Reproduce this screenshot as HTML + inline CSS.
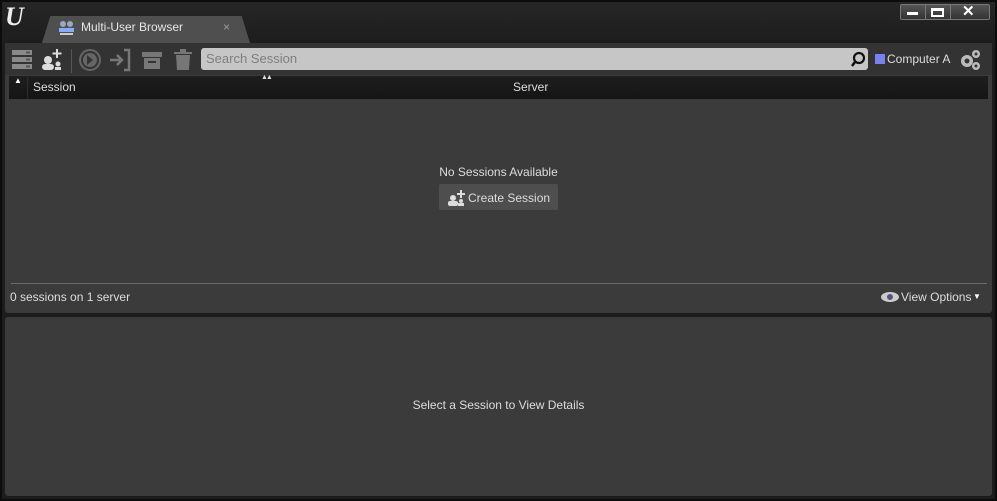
<!DOCTYPE html>
<html><head><style>
*{margin:0;padding:0;box-sizing:border-box}
body{width:997px;height:501px;background:#161616;font-family:"Liberation Sans",sans-serif;font-size:12px;color:#d8d8d8;position:relative;overflow:hidden}
.a{position:absolute}
</style></head><body>
<div class="a" style="left:0;top:0;width:997px;height:501px;border:2px solid #0c0c0c;background:linear-gradient(#262626,#1c1c1c 45px,#1c1c1c)"></div>
<div class="a" style="left:5px;top:2px;font:bold italic 26px 'Liberation Serif',serif;color:#eee;letter-spacing:-3px">U</div>
<div class="a" style="left:42px;top:16px;width:208px;height:27px;background:#4f4f4f;clip-path:polygon(4% 0,96% 0,100% 100%,0 100%);border-radius:6px 6px 0 0"></div>
<svg class="a" style="left:58px;top:20px" width="18" height="16"><circle cx="5" cy="4" r="3" fill="#9ab"/><circle cx="12" cy="4" r="3" fill="#9ab"/><rect x="1" y="8" width="15" height="4" fill="#8af"/><rect x="2" y="13" width="13" height="2" fill="#ccc"/></svg>
<div class="a" style="left:81px;top:20px;font-size:12px;color:#e6e6e6">Multi-User Browser</div>
<div class="a" style="left:223px;top:20px;color:#999;font-size:12px">×</div>
<div class="a" style="left:900px;top:4px;width:90px;height:16px;background:linear-gradient(#555,#333);border:1px solid #777;border-radius:2px"></div>
<div class="a" style="left:925px;top:4px;width:1px;height:16px;background:#777"></div>
<div class="a" style="left:950px;top:4px;width:1px;height:16px;background:#777"></div>
<div class="a" style="left:907px;top:12px;width:11px;height:3px;background:#fff"></div>
<div class="a" style="left:931px;top:8px;width:13px;height:9px;border:2px solid #fff;border-top-width:3px"></div>
<div class="a" style="left:962px;top:2px;color:#fff;font-weight:bold;font-size:15px">✕</div>
<div class="a" style="left:5px;top:43px;width:987px;height:270px;background:#3b3b3b;border-radius:3px"></div>
<div class="a" style="left:5px;top:43px;width:987px;height:32px;background:#333"></div>
<svg class="a" style="left:10px;top:47px" width="185" height="26">
<g fill="#8a8a8a"><rect x="2" y="3" width="20" height="5"/><rect x="2" y="10" width="20" height="5"/><rect x="2" y="17" width="20" height="5"/></g>
<g fill="#555"><rect x="16" y="4.5" width="4" height="2"/><rect x="16" y="11.5" width="4" height="2"/><rect x="16" y="18.5" width="4" height="2"/></g>
<g fill="#ddd"><circle cx="38" cy="13" r="4"/><rect x="32" y="17" width="12" height="6" rx="3"/><circle cx="48" cy="17" r="2.5"/><rect x="45" y="20" width="6" height="3"/><rect x="46" y="2" width="2" height="9"/><rect x="42.5" y="5.5" width="9" height="2"/></g>
<rect x="61" y="2" width="1" height="24" fill="#555"/>
<circle cx="80" cy="13" r="10" fill="none" stroke="#666" stroke-width="2"/><circle cx="80" cy="13" r="7" fill="#666"/><path d="M77 8l6 5-6 5z" fill="#333"/>
<path d="M100 13h11M107 8l5 5-5 5M114 3h5v20h-5" stroke="#777" stroke-width="2.5" fill="none"/>
<rect x="132" y="5" width="20" height="5" fill="#777"/><rect x="134" y="11" width="16" height="11" fill="#777"/><rect x="138" y="14" width="8" height="2" fill="#333"/>
<g fill="#777"><rect x="164" y="5" width="18" height="2"/><rect x="170" y="2" width="6" height="3"/><path d="M166 8h14l-1 15h-12z"/></g>
</svg>
<div class="a" style="left:201px;top:48px;width:667px;height:22px;background:#c6c6c6;border-radius:3px"></div>
<div class="a" style="left:206px;top:51px;color:#7e7e7e;font-size:13px">Search Session</div>
<svg class="a" style="left:850px;top:51px" width="16" height="16"><circle cx="9" cy="7" r="5" stroke="#111" stroke-width="2.2" fill="none"/><path d="M5 11l-3 4" stroke="#111" stroke-width="2.5"/></svg>
<div class="a" style="left:875px;top:54px;width:10px;height:10px;background:#7a80f0"></div>
<div class="a" style="left:887px;top:52px;color:#ddd;font-size:12px">Computer A</div>
<svg class="a" style="left:958px;top:48px" width="24" height="24" fill="#bbb"><circle cx="9" cy="13" r="6"/><circle cx="9" cy="13" r="2.5" fill="#333"/><circle cx="18" cy="6" r="4"/><circle cx="18" cy="18" r="4"/><circle cx="18" cy="6" r="1.5" fill="#333"/><circle cx="18" cy="18" r="1.5" fill="#333"/></svg>
<div class="a" style="left:9px;top:76px;width:979px;height:23px;background:linear-gradient(#1e1e1e,#151515)"></div>
<div class="a" style="left:27px;top:77px;width:1px;height:21px;background:#2c2c2c"></div>
<div class="a" style="left:14px;top:76px;color:#fff;font-size:8px">▲</div>
<div class="a" style="left:261px;top:74px;color:#ddd;font-size:7px;letter-spacing:-2px">▲▲</div>
<div class="a" style="left:33px;top:80px;color:#ddd;font-size:12px">Session</div>
<div class="a" style="left:513px;top:80px;color:#ddd;font-size:12px">Server</div>
<div class="a" style="left:0;top:165px;width:997px;text-align:center;font-size:12px;color:#ddd">No Sessions Available</div>
<div class="a" style="left:439px;top:184px;width:119px;height:26px;background:#4e4e4e;border-radius:2px"></div>
<svg class="a" style="left:447px;top:189px" width="20" height="18" fill="#ddd"><circle cx="6" cy="9" r="3"/><rect x="1" y="12" width="10" height="5" rx="2"/><circle cx="14" cy="12" r="2"/><rect x="11" y="14" width="6" height="3"/><rect x="13" y="1" width="2" height="8"/><rect x="10" y="4" width="8" height="2"/></svg>
<div class="a" style="left:468px;top:191px;color:#ddd;font-size:12px">Create Session</div>
<div class="a" style="left:11px;top:283px;width:976px;height:1px;background:#6a6a6a"></div>
<div class="a" style="left:10px;top:290px;color:#ddd;font-size:12px">0 sessions on 1 server</div>
<svg class="a" style="left:880px;top:291px" width="20" height="12"><ellipse cx="10" cy="6" rx="9" ry="5" fill="#ccc"/><circle cx="10" cy="6" r="3" fill="#557"/></svg>
<div class="a" style="left:901px;top:290px;color:#ddd;font-size:12px">View Options</div>
<div class="a" style="left:973px;top:292px;color:#fff;font-size:8px">▼</div>
<div class="a" style="left:5px;top:317px;width:987px;height:179px;background:#3b3b3b;border-radius:3px"></div>
<div class="a" style="left:0;top:398px;width:997px;text-align:center;font-size:12px;color:#ddd">Select a Session to View Details</div>
</body></html>
